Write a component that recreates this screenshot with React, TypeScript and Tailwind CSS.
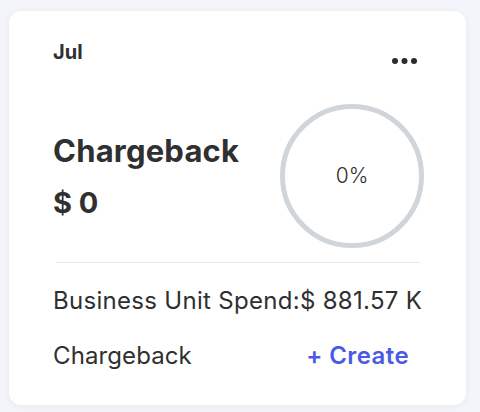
export default function App() {
  return (
    <div className="w-[480px] h-[412px] bg-[#f4f5fa] pt-[11px] pl-[9px] font-['Inter','Liberation_Sans',sans-serif] text-[#303030]">
      <div className="w-[457px] h-[394px] rounded-[12px] bg-white shadow-[0_1px_6px_rgba(30,40,80,0.06)] pt-[30px] pl-[44px] pr-[42px]">
        <div className="flex justify-between items-start">
          <p className="text-[20px] leading-[22px] font-bold">Jul</p>
          <svg className="mt-[17px] mr-[7px]" width="25" height="6" viewBox="0 0 25 6">
            <circle cx="3" cy="3" r="3" fill="#2b2b2b" />
            <circle cx="12.5" cy="3" r="3" fill="#2b2b2b" />
            <circle cx="22" cy="3" r="3" fill="#2b2b2b" />
          </svg>
        </div>

        <div className="mt-[40px] flex justify-between items-center">
          <div className="flex flex-col gap-[17px]">
            <h2 className="text-[31px] leading-[36px] font-bold tracking-[0.2px]">Chargeback</h2>
            <p className="text-[29px] leading-[34px] font-bold">$ 0</p>
          </div>
          <div className="w-[144px] h-[144px] rounded-full border-[5px] border-[#d0d5d9] flex items-center justify-center">
            <span className="text-[21px] font-light">0%</span>
          </div>
        </div>

        <div className="mt-[14px] ml-[3px] mr-[4px] h-px bg-[#e6e6e6]" />

        <p className="mt-[24px] text-[24px] leading-[28px] tracking-[0.3px]">Business Unit Spend:$ 881.57 K</p>

        <div className="mt-[27px] flex justify-between items-center">
          <p className="text-[24px] leading-[28px] tracking-[0.1px]">Chargeback</p>
          <button className="mr-[15px] text-[24px] leading-[28px] font-semibold tracking-[0.4px] text-[#4b5ae3]">+ Create</button>
        </div>
      </div>
    </div>
  );
}
